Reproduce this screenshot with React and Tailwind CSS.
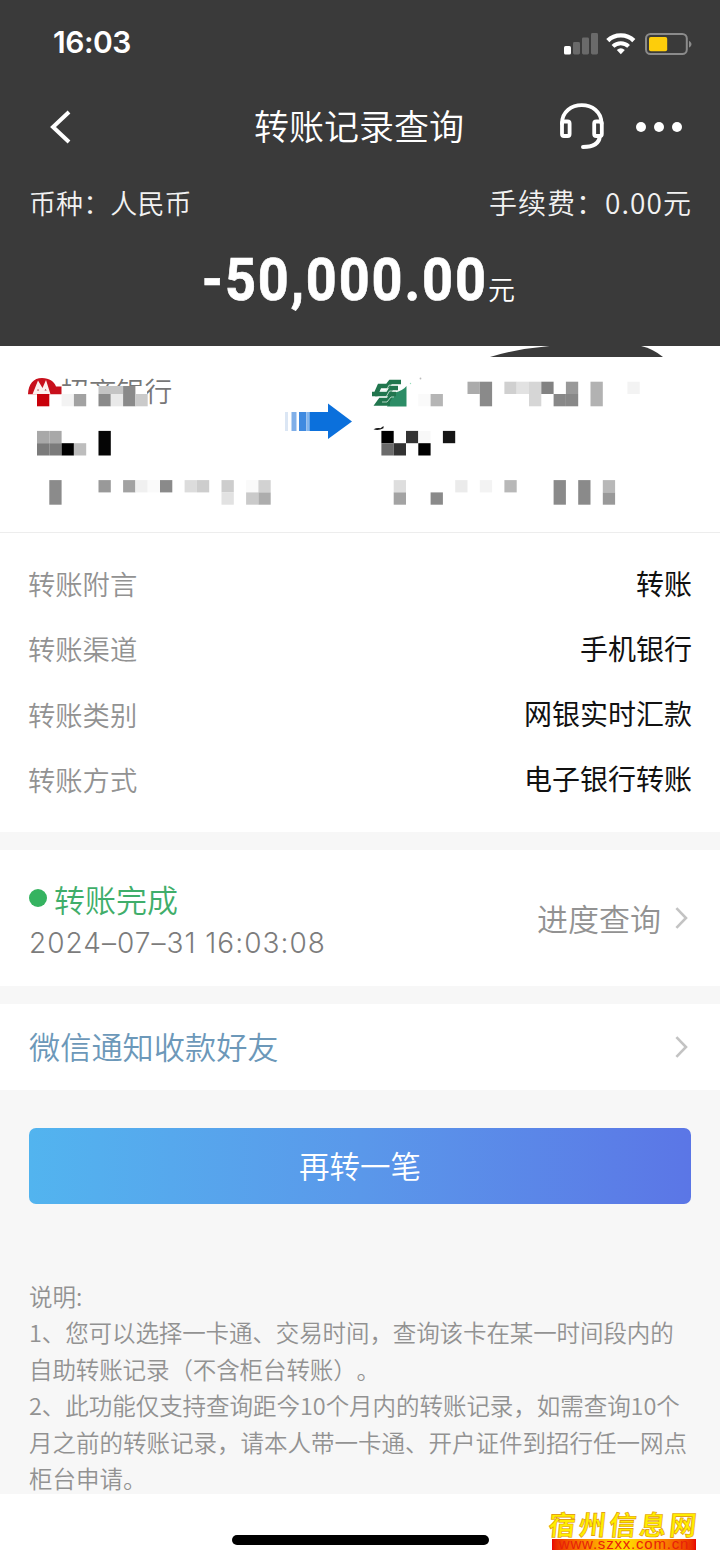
import React from 'react';

const details = [
  { label: '转账附言', value: '转账' },
  { label: '转账渠道', value: '手机银行' },
  { label: '转账类别', value: '网银实时汇款' },
  { label: '转账方式', value: '电子银行转账' },
];

const notes = [
  { text: '说明:', tracking: 'tracking-[0px]' },
  { text: '1、您可以选择一卡通、交易时间，查询该卡在某一时间段内的', tracking: 'tracking-[-0.1px]' },
  { text: '自助转账记录（不含柜台转账）。', tracking: 'tracking-[-0.1px]' },
  { text: '2、此功能仅支持查询距今10个月内的转账记录，如需查询10个', tracking: 'tracking-[-0.04px]' },
  { text: '月之前的转账记录，请本人带一卡通、开户证件到招行任一网点', tracking: 'tracking-[0px]' },
  { text: '柜台申请。', tracking: 'tracking-[0px]' },
];

// [column, row, rows spanned, colour]
const mosaic = [
  [0, 0, 1, '#c8000a'], [2, 0, 1, '#f3f3f3'], [3, 0, 1, '#a2a2a2'],
  [5, 0, 1, '#8a8a8a'], [6, 0, 1, '#e9e9e9'], [7, 0, 1, '#8a8a8a'], [8, 0, 1, '#cacaca'],
  [0, 3, 1, '#a8a8a8'], [1, 3, 1, '#a8a8a8'], [0, 4, 1, '#7b7b7b'], [1, 4, 1, '#7b7b7b'],
  [2, 4, 1, '#000000'], [3, 4, 1, '#bdbdbd'], [5, 3, 2, '#050505'],
  [1, 7, 2, '#8b8b8b'], [5, 7, 1, '#999999'], [7, 7, 1, '#a2a2a2'], [8, 7, 1, '#f0f0f0'],
  [9, 7, 1, '#fafafa'], [10, 7, 1, '#8a8a8a'], [12, 7, 1, '#dcdcdc'], [13, 7, 1, '#cdcdcd'],
  [15, 7, 1, '#cdcdcd'], [15, 8, 1, '#e2e2e2'], [17, 7, 1, '#fafafa'], [17, 8, 1, '#cacaca'],
  [18, 7, 1, '#d2d2d2'], [18, 8, 1, '#adadad'],
  [31, 0, 1, '#fafafa'], [32, 0, 1, '#b5b5b5'], [35, -1, 1, '#ababab'], [36, -1, 2, '#8a8a8a'],
  [38, -1, 1, '#d0d0d0'], [39, -1, 1, '#e2e2e2'], [40, -1, 2, '#d6d6d6'], [41, -1, 1, '#828282'],
  [42, 0, 1, '#888888'], [43, -1, 1, '#999999'], [43, 0, 1, '#888888'], [45, -1, 2, '#b2b2b2'],
  [48, -1, 1, '#f3f3f3'],
  [28, 3, 1, '#000000'], [30, 3, 1, '#333333'], [31, 3, 1, '#f8f8f8'], [33, 3, 1, '#151515'],
  [28, 4, 1, '#6b6b6b'], [29, 4, 1, '#333333'], [31, 4, 1, '#000000'],
  [29, 7, 1, '#dedede'], [29, 8, 1, '#a3a3a3'], [32, 8, 1, '#8a8a8a'], [34, 7, 1, '#ebebeb'],
  [36, 7, 1, '#f3f3f3'], [38, 7, 1, '#b8b8b8'], [42, 7, 2, '#8a8a8a'], [44, 7, 2, '#8a8a8a'],
  [46, 7, 1, '#b8b8b8'], [46, 8, 1, '#999999'],
];

const CELL = 12.3;

const StatusIcons = () => (
  <svg width="130" height="24" viewBox="564 31 130 24" fill="none">
    <rect x="564" y="46" width="7" height="8.5" rx="1.6" fill="#fff" />
    <rect x="573" y="42" width="7" height="12.5" rx="1.4" fill="#6a6a6a" />
    <rect x="582" y="37.5" width="7" height="17" rx="1.4" fill="#6a6a6a" />
    <rect x="591" y="33" width="7" height="21.5" rx="1.4" fill="#6a6a6a" />
    <path d="M607.8 40.6C614.8 33.6 626.8 33.6 633.8 40.6" stroke="#fff" strokeWidth="4.4" />
    <path d="M613 46.4C617.4 42.2 624.2 42.2 628.6 46.4" stroke="#fff" strokeWidth="4" />
    <path d="M616.8 50Q620.8 46.6 624.8 50L620.8 54.2Z" fill="#fff" />
    <rect x="646" y="34" width="40.8" height="20" rx="4.5" stroke="#8b8b8b" strokeWidth="2" />
    <rect x="649" y="37" width="18.2" height="14.2" rx="1.8" fill="#fdcd0b" />
    <path d="M689 41V47.5C692.3 46.2 692.3 42.3 689 41Z" fill="#8b8b8b" />
  </svg>
);

const HeadsetIcon = () => (
  <svg width="46" height="48" viewBox="559 102.5 46 48" fill="none" stroke="#fff" strokeLinecap="round" strokeLinejoin="round">
    <path d="M562 123C562 98.500 601.500 98.500 601.500 123" strokeWidth="3.800" />
    <rect x="562" y="121" width="7.600" height="14.500" rx="2" strokeWidth="3.800" />
    <rect x="594.200" y="121" width="7.600" height="14.500" rx="2" strokeWidth="3.800" />
    <path d="M599.800 136C599 143.500 592 146.500 583 146.500" strokeWidth="4" />
  </svg>
);

const Chevron = () => (
  <svg width="16" height="24" viewBox="0 0 16 24" fill="none" stroke="#c3c3c3" strokeWidth="2.6">
    <path d="M2.400 2.200L12 12L2.400 21.800" />
  </svg>
);

const Header = () => (
  <header className="flex h-[346px] flex-col bg-[#3a3a3a] text-white">
    <div className="flex h-[86px] items-center justify-between pl-[53px] pr-[26px]">
      <span className="mb-[2px] font-['Inter'] text-[30px] font-semibold leading-[32px] tracking-[-0.5px]">16:03</span>
      <StatusIcons />
    </div>
    <div className="grid h-[82px] grid-cols-[1fr_auto_1fr] items-center pl-[48px] pr-[38px]">
      <svg width="24" height="36" viewBox="48 109 24 36" fill="none" stroke="#fff" strokeWidth="4">
        <path d="M69 112L53 127L69 142" />
      </svg>
      <h1 className="mb-[5px] pr-[12px] text-[35px] font-[350] leading-none">转账记录查询</h1>
      <div className="flex items-center justify-end gap-[31px]">
        <HeadsetIcon />
        <div className="flex gap-[8px]">
          <i className="size-[10px] rounded-full bg-white" />
          <i className="size-[10px] rounded-full bg-white" />
          <i className="size-[10px] rounded-full bg-white" />
        </div>
      </div>
    </div>
    <div className="flex h-[70px] items-center justify-between pl-[29px] pr-[28px] font-[350] text-[#f2f2f2]">
      <span className="text-[27px] tracking-[0.100px]">币种：人民币</span>
      <span className="mb-[2px] text-[28px] tracking-[1.050px]">手续费：0.00元</span>
    </div>
    <div className="flex h-[82px] items-baseline justify-center pr-[35px] pt-[1px]">
      <span className="origin-right scale-x-90 font-['Roboto'] text-[60px] font-bold leading-[82px] tracking-[2.100px] [-webkit-text-stroke:0.700px_#fff]">-50,000.00</span>
      <span className="text-[27px] font-[350]">元</span>
    </div>
  </header>
);

const Accounts = () => (
  <section className="relative h-[187px] border-b border-[#ededed] bg-white pl-[61px] pt-[23px]">
    <p className="text-[27.800px] font-[350] leading-[42px] text-[#777]">招商银行</p>
    <svg className="absolute left-0 top-0" width="720" height="186" viewBox="0 346 720 186">
      <path d="M490 357Q520 348 556 345.500H639Q653 348.500 663 357Z" fill="#3a3a3a" />

      {/* payer bank */}
      <rect x="60" y="386" width="87" height="22" fill="#fff" />
      <path d="M28 394C28.500 384 33.500 378 42 378C49.500 378 54.500 382 56 386.500H61.500V394.200H28Z" fill="#c8101c" />
      <path d="M32.500 394.200L38 380.500L42.500 388L46 380L50.500 394.200Z" fill="#fbf0ee" />
      <path d="M37 390.500L38 389L39.200 390.500ZM44.500 390.500L45.500 389L46.700 390.500Z" fill="#a8353a" />
      <rect x="98.500" y="386" width="24.600" height="8" fill="#c4c4c4" />
      <rect x="123.100" y="386" width="12.300" height="8" fill="#8a8a8a" />

      {/* transfer arrow */}
      <rect x="285" y="412" width="3" height="19" fill="#dbe6f4" />
      <rect x="291.500" y="412" width="5" height="19" fill="#80afe8" />
      <rect x="299" y="412" width="7.500" height="19" fill="#3f8ae0" />
      <rect x="307" y="412" width="2.500" height="19" fill="#84b6ee" />
      <path d="M309.500 412H328V403.500L352 421.500L328 439V431H309.500Z" fill="#0b70dc" />

      {/* payee bank */}
      <path d="M387 406.500L391 398L395 392.500C400 391.500 404 389 406.500 386V406.500Z" fill="#2c8d66" />
      <g fill="none" stroke="#21764e" strokeWidth="4.600">
        <path d="M401 382H390.500L387.500 386H379.500L376 394H372" />
        <path d="M398 388H391.500L388 394H375" />
        <path d="M396 394H391.500L388.500 400H380.500L378 403.500H390" />
      </g>
      <path d="M380.500 391H386L389 385.200H398M379 397H386L389.500 391H396M382 402H387L391 397H394" fill="none" stroke="#d5ebe0" strokeWidth="0.800" />
      <path d="M373.500 429.200Q377 427.500 380.500 428.200L383.500 426L383.500 428.300Q378 431 373.500 429.200Z" fill="#111" />
      <circle cx="420.500" cy="378.500" r="0.900" fill="#bbb" />
      <circle cx="410.500" cy="383.500" r="0.700" fill="#9db" />

      {mosaic.map(([col, row, span, color]) => (
        <rect
          key={`${col}-${row}`}
          x={37 + col * CELL}
          y={394 + row * CELL}
          width={CELL}
          height={span * CELL}
          fill={color}
        />
      ))}
    </svg>
  </section>
);

const Watermark = () => (
  <div className="absolute left-[549px] top-[14px] w-[148px]">
    <p className="origin-left -skew-x-6 whitespace-nowrap text-[27px] font-bold leading-[31px] tracking-[3.200px] text-[#ffee00] [-webkit-text-stroke:0.600px_#e09000]">
      宿州信息网
    </p>
    <p className="ml-[3px] h-[11px] w-[144px] whitespace-nowrap bg-linear-to-r from-[#e80000] via-[#ffe000] to-[#e80000] text-center font-['Liberation_Sans'] text-[15px] leading-[10px] tracking-[0.800px] text-[#e8200a]">
      www.szxx.com.cn
    </p>
  </div>
);

const App = () => {
  return (
    <div className="h-[1560px] w-[720px] overflow-hidden bg-[#f7f7f7] font-['Noto_Sans_CJK_SC',sans-serif]">
      <Header />
      <Accounts />

      <section className="flex h-[299px] flex-col bg-white px-[28px] pt-[18px]">
        {details.map(item => (
          <div key={item.label} className="flex h-[65.200px] items-center justify-between">
            <span className="text-[27.300px] font-[350] text-[#929292]">{item.label}</span>
            <span className="mb-[2px] text-[28px] text-[#111]">{item.value}</span>
          </div>
        ))}
      </section>

      <section className="mt-[18px] flex h-[136px] items-center justify-between bg-white pl-[29px] pr-[30px]">
        <div className="pt-[4px]">
          <div className="flex h-[43px] items-center gap-[7px] text-[31px] font-[350] text-[#3fae6a]">
            <i className="mb-[2px] size-[18px] rounded-full bg-[#35b360]" />
            转账完成
          </div>
          <p className="h-[42px] font-['Inter'] text-[28px] font-light leading-[45px] tracking-[1.020px] text-[#7c7c7c]">2024–07–31 16:03:08</p>
        </div>
        <div className="flex items-center gap-[13px] text-[31px] font-[350] text-[#929292]">
          进度查询
          <Chevron />
        </div>
      </section>

      <section className="mt-[18px] flex h-[86px] items-center justify-between bg-white pb-[1px] pl-[29px] pr-[30px]">
        <span className="text-[31.200px] font-[350] text-[#6c98b9]">微信通知收款好友</span>
        <Chevron />
      </section>

      <div className="px-[29px] pt-[38px]">
        <button className="h-[76px] w-full rounded-[7px] bg-linear-to-r from-[#52b4ef] via-[#5a98ea] to-[#5b76e6] text-[30.500px] font-[350] text-white">
          再转一笔
        </button>
      </div>

      <div className="h-[290px] whitespace-nowrap pl-[29px] pt-[73.500px] text-[23.500px] font-[350] leading-[36.500px] text-[#929292] [font-kerning:none] [text-spacing-trim:space-all]">
        {notes.map(note => (
          <p key={note.text} className={note.tracking}>{note.text}</p>
        ))}
      </div>

      <footer className="relative h-[66px] bg-white pt-[41px]">
        <div className="ml-[232px] h-[10px] w-[257px] rounded-full bg-black" />
        <Watermark />
      </footer>
    </div>
  );
};

export default App;
